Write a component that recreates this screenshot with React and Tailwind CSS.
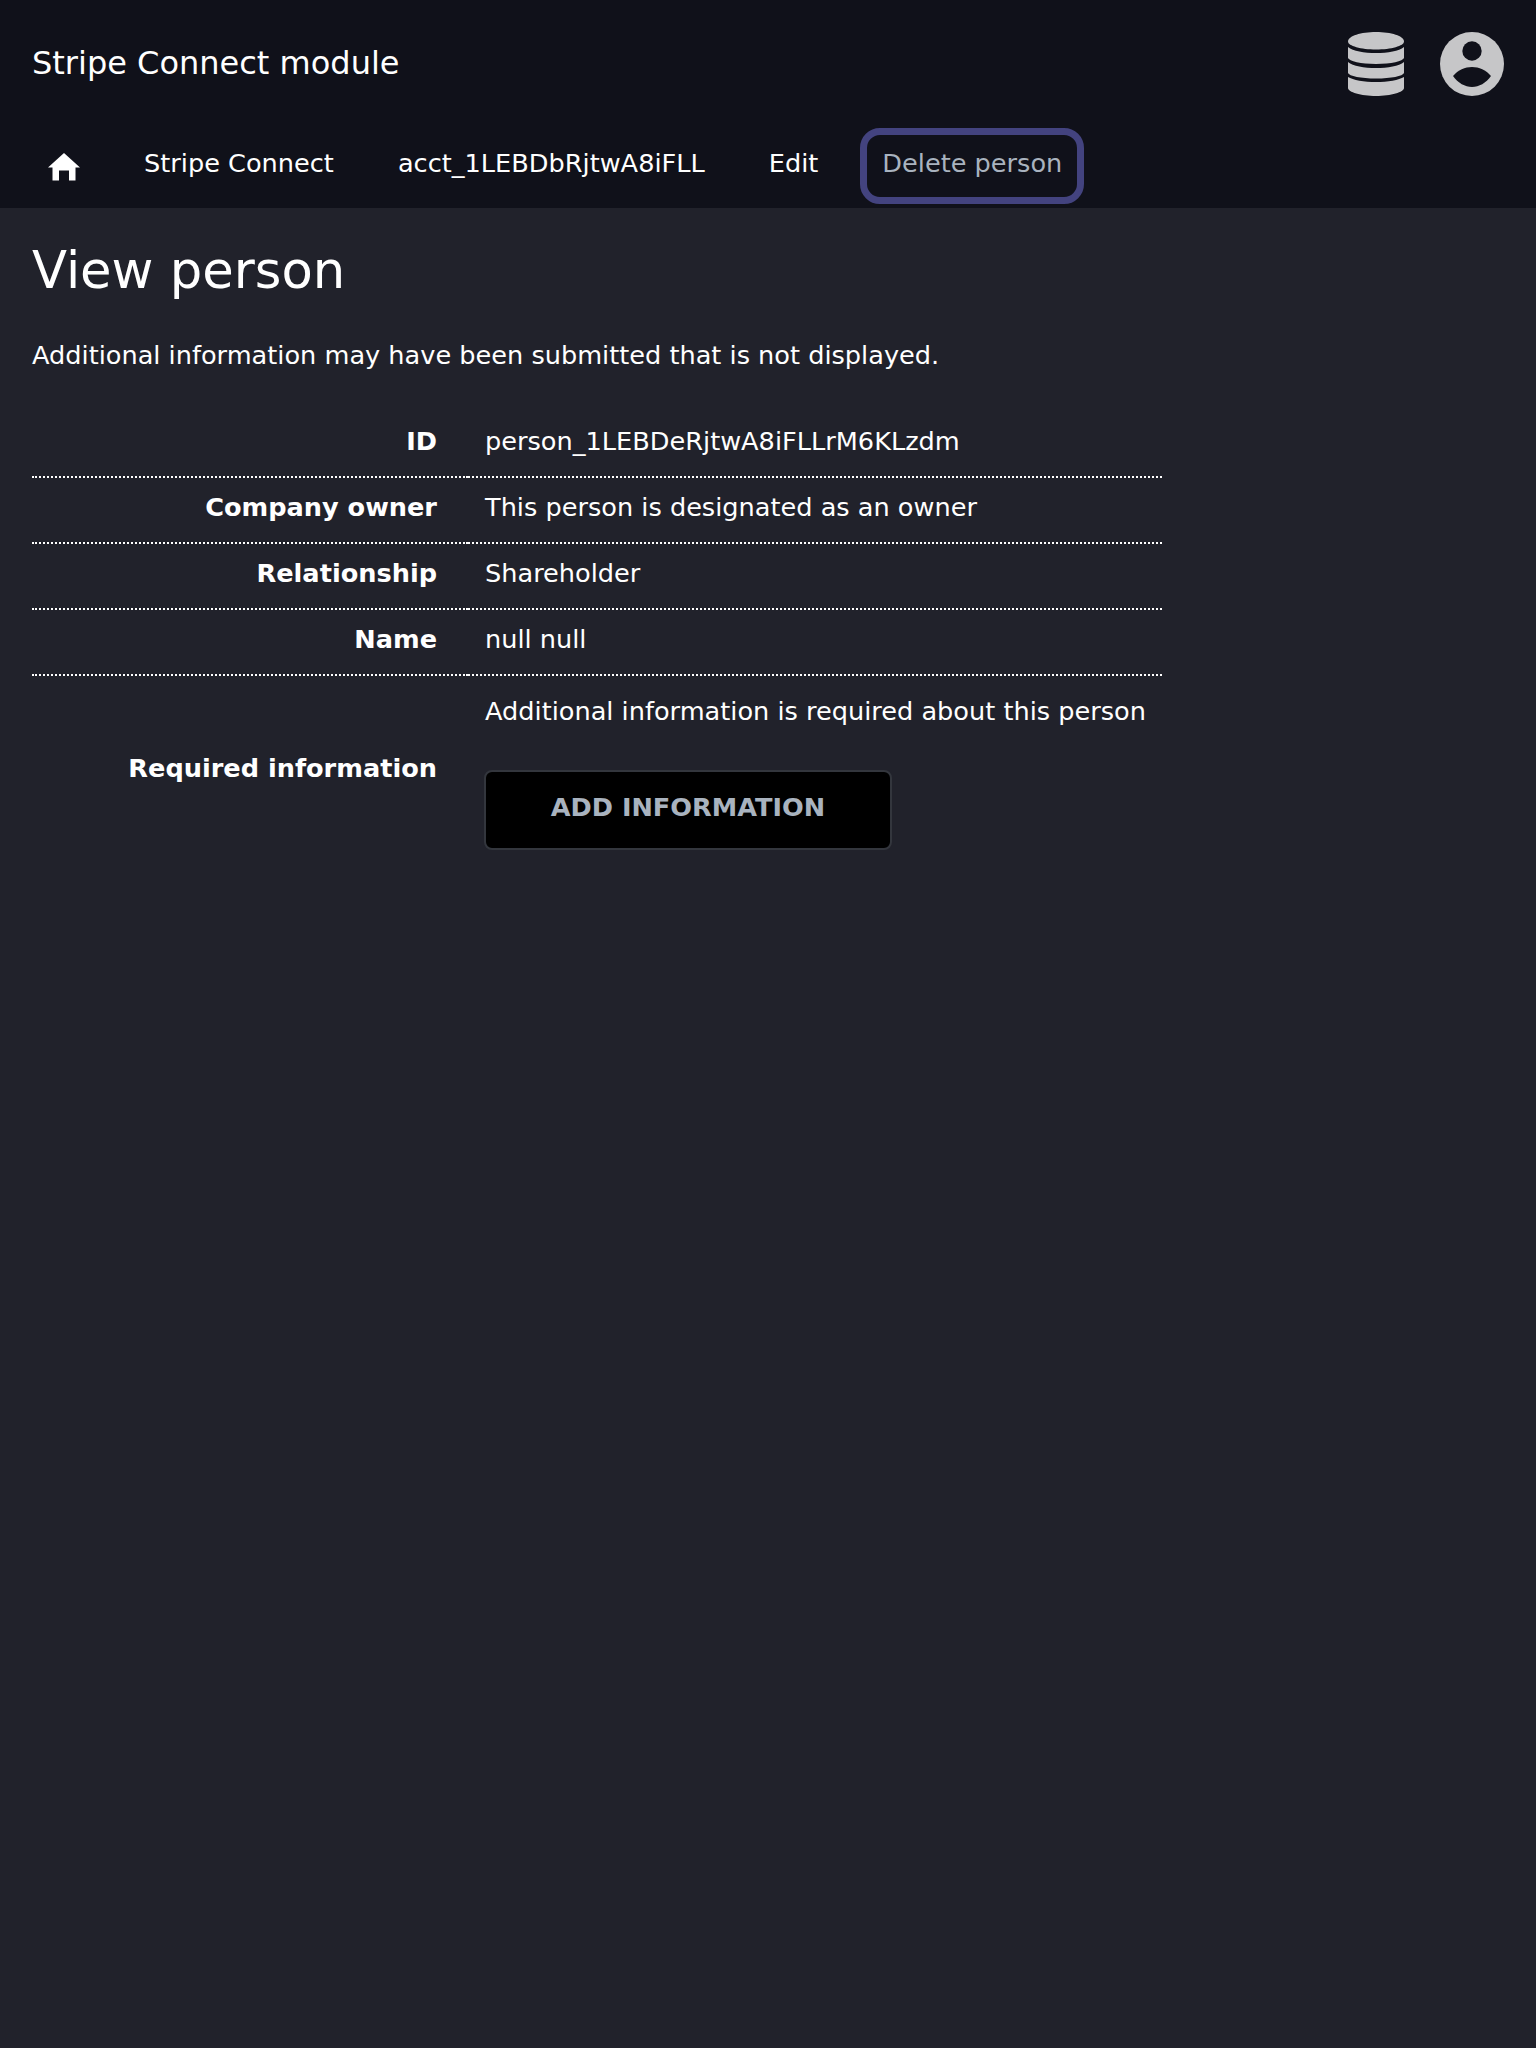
import React from 'react';

const rows = [
  ['ID', 'person_1LEBDeRjtwA8iFLLrM6KLzdm'],
  ['Company owner', 'This person is designated as an owner'],
  ['Relationship', 'Shareholder'],
  ['Name', 'null null'],
];

const DatabaseIcon = () => (
  <svg width="56" height="64" viewBox="0 0 56 64" fill="#c6c6c8">
    <path d="M28 0C43 0 56 4 56 9.5C56 14 43 17.5 28 17.5C13 17.5 0 14 0 9.5C0 4 13 0 28 0Z" />
    <path d="M0 15C5 19 16 21 28 21C40 21 51 19 56 15V26C55 29 43 32 28 32C13 32 1 29 0 26Z" />
    <path d="M0 30C5 34 16 36 28 36C40 36 51 34 56 30V41C55 44 43 46.500 28 46.500C13 46.500 1 44 0 41Z" />
    <path d="M0 45C5 48 16 50 28 50C40 50 51 48 56 45V56C56 60 43 64 28 64C13 64 0 60 0 56Z" />
  </svg>
);

const UserIcon = () => (
  <svg width="64" height="64" viewBox="0 0 64 64">
    <circle cx="32" cy="32" r="32" fill="#c6c6c8" />
    <circle cx="32" cy="19" r="9.7" fill="#10111a" />
    <path d="M13 44C18 38 25 35 32 35C39 35 46 38 51 44C46 51 39 55 32 55C25 55 18 51 13 44Z" fill="#10111a" />
  </svg>
);

const HomeIcon = () => (
  <svg width="32" height="28" viewBox="0 0 32 28" fill="#fff">
    <path d="M16 0L32 14.5H27.5V27.5H21V17.5H11V27.5H4.5V14.5H0Z" />
  </svg>
);

export default function App() {
  return (
    <div className="min-h-screen bg-[#21222b] text-white font-['DejaVu_Sans',sans-serif] text-[25.6px]">
      <header className="bg-[#10111a] h-[208px]">
        <div className="flex items-center justify-between h-[126px] px-[32px]">
          <h2 className="text-[32px]">Stripe Connect module</h2>
          <div className="flex items-center gap-[36px] mt-[2px]">
            <DatabaseIcon />
            <UserIcon />
          </div>
        </div>
        <nav className="flex items-center pl-[32px] h-[76px] mt-[2px]">
          <a className="w-[64px] flex justify-center pt-[2px]"><HomeIcon /></a>
          <a className="ml-[48px] mb-[6px]">Stripe Connect</a>
          <a className="ml-[64px] mb-[6px]">acct_1LEBDbRjtwA8iFLL</a>
          <a className="ml-[64px] mb-[6px]">Edit</a>
          <a className="ml-[42px] h-[76px] flex items-center px-[15px] pb-[6px] rounded-[20px] border-[7px] border-[#43437f] text-[#a9b3bf]">Delete person</a>
        </nav>
      </header>
      <main className="pl-[32px] pt-[30px]">
        <h1 className="text-[51.2px] leading-[64px]">View person</h1>
        <p className="mt-[33px] leading-[40px]">Additional information may have been submitted that is not displayed.</p>
        <table className="mt-[36px] w-[1130px] border-collapse">
          <tbody>
            {rows.map(([label, value]) => (
              <tr key={label}>
                <th className="w-[436px] h-[66px] pr-[31px] pb-[5px] text-right font-bold border-b-2 border-dotted border-white">{label}</th>
                <td className="h-[66px] pl-[17px] pb-[5px] border-b-2 border-dotted border-white">{value}</td>
              </tr>
            ))}
            <tr>
              <th className="pr-[31px] pb-[3px] text-right font-bold">Required information</th>
              <td className="pl-[17px] pt-[19px] pb-[14px]">
                <p className="leading-[32px]">Additional information is required about this person</p>
                <button className="block mt-[43px] -ml-[1px] w-[408px] h-[80px] bg-black border-2 border-[#33363d] rounded-[8px] text-[#a9b3bf] font-bold pb-[5px]">ADD INFORMATION</button>
              </td>
            </tr>
          </tbody>
        </table>
      </main>
    </div>
  );
}
